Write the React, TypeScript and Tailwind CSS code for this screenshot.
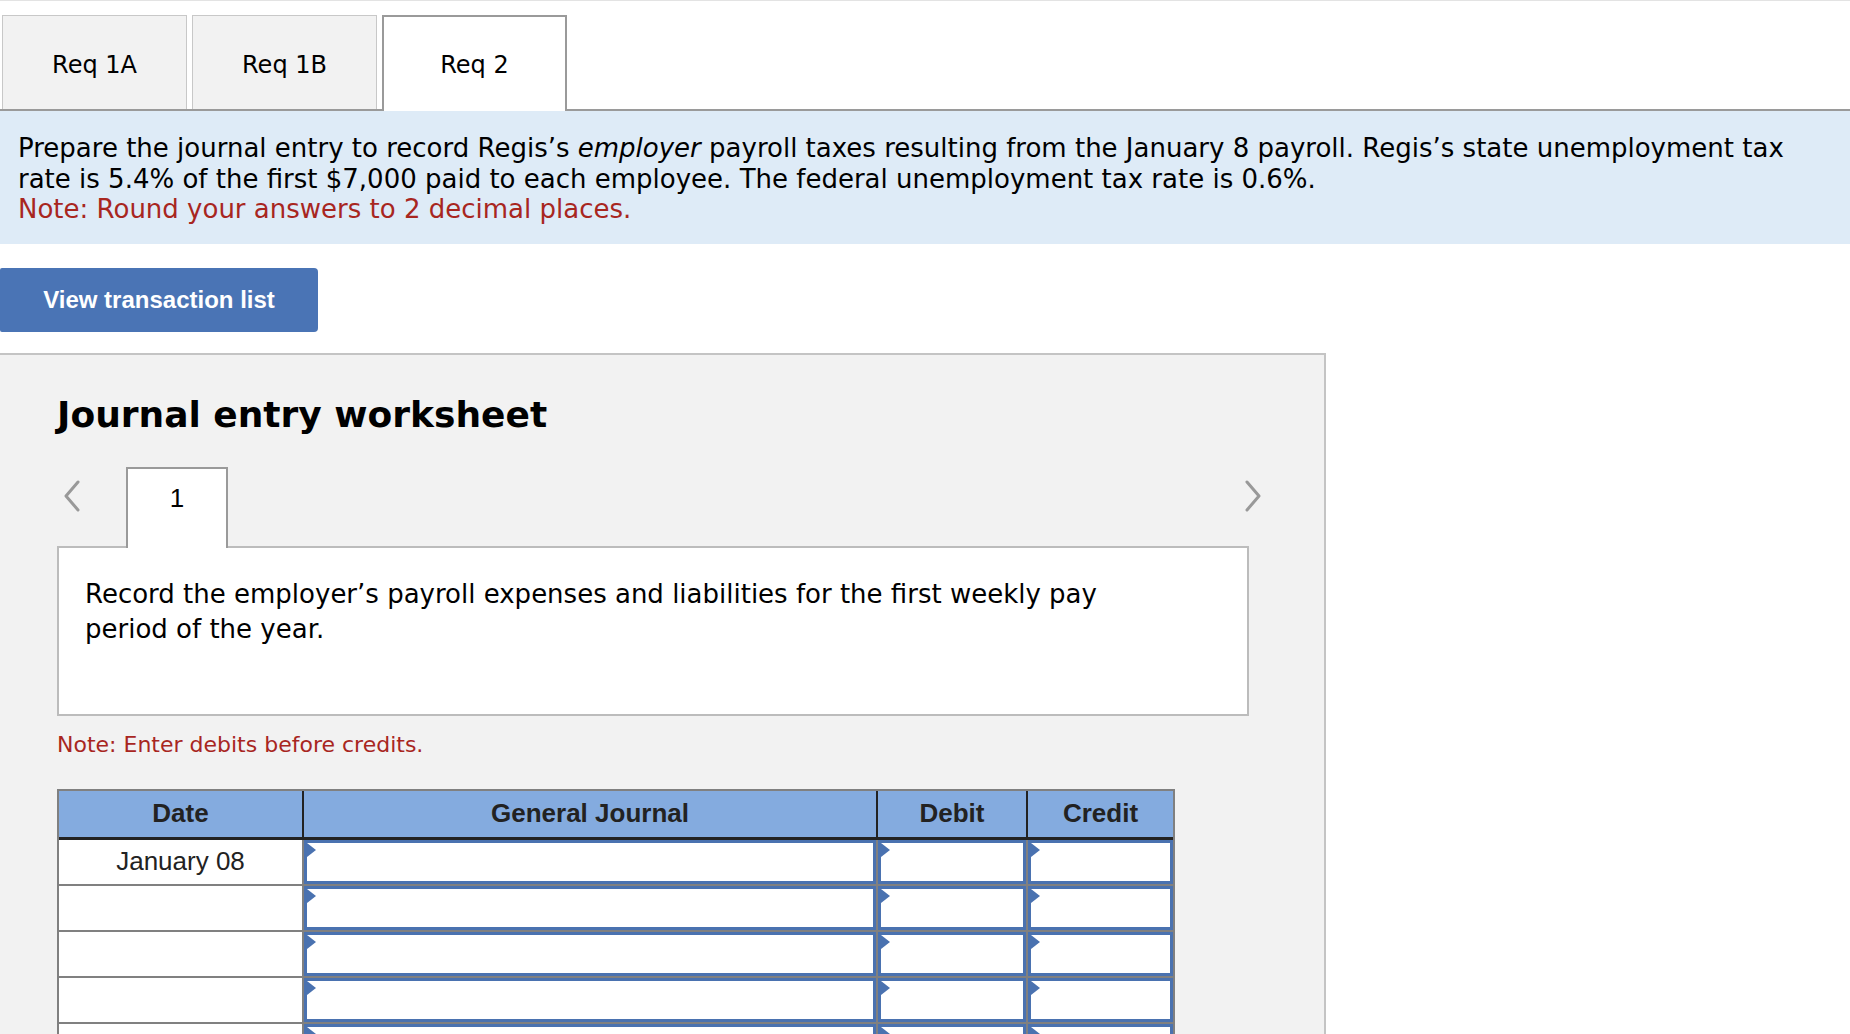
import React from 'react';

const verdana = { fontFamily: '"DejaVu Sans", Verdana, sans-serif' };
const arial = { fontFamily: '"Liberation Sans", Arial, sans-serif' };

const TABS = ['Req 1A', 'Req 1B', 'Req 2'];
const ROWS = ['January 08', '', '', '', '', ''];

function Flag() {
  return (
    <svg className="absolute left-0 top-0" width="9" height="14" viewBox="0 0 9 14">
      <path d="M0 0 L9 7 L0 14 Z" fill="#4a72b0" />
    </svg>
  );
}

function InputCell({ w }: { w: string }) {
  return (
    <div className={`relative h-[44px] border-[3px] border-[#4a72b0] bg-white ${w}`}>
      <Flag />
    </div>
  );
}

function Chevron({ dir }: { dir: 'left' | 'right' }) {
  return (
    <svg width="18" height="32" viewBox="0 0 18 32">
      <path
        d={dir === 'left' ? 'M15 2 L3 16 L15 30' : 'M3 2 L15 16 L3 30'}
        fill="none"
        stroke="#999"
        strokeWidth="3"
        strokeLinecap="round"
        strokeLinejoin="round"
      />
    </svg>
  );
}

export default function App() {
  return (
    <div className="min-h-screen bg-white text-black" style={verdana}>
      <div className="h-px bg-[#e3e3e3]" />

      {/* requirement tabs */}
      <div className="mt-[14px] flex items-end border-b-2 border-[#9a9a9a] pl-[2px]">
        {TABS.map((t, i) => {
          const active = i === 2;
          return (
            <div
              key={t}
              className={
                active
                  ? '-mb-[2px] mr-[5px] flex h-[96px] w-[185px] items-center justify-center border-2 border-b-0 border-[#9a9a9a] bg-white pt-[2px] text-[24px]'
                  : 'mr-[5px] flex h-[94px] w-[185px] items-center justify-center border border-b-0 border-[#c8c8c8] bg-[#f2f2f2] pt-[4px] text-[24px]'
              }
            >
              {t}
            </div>
          );
        })}
      </div>

      {/* instructions */}
      <div className="bg-[#deebf7] pb-[19px] pl-[18px] pr-[18px] pt-[22px] text-[26px] leading-[30.5px]">
        <p>
          Prepare the journal entry to record Regis’s <em>employer</em> payroll taxes resulting from the
          January 8 payroll. Regis’s state unemployment tax
          <br />
          rate is 5.4% of the first $7,000 paid to each employee. The federal unemployment tax rate is 0.6%.
        </p>
        <p className="text-[#a8261f]">Note: Round your answers to 2 decimal places.</p>
      </div>

      <button
        className="mt-[24px] h-[64px] w-[318px] rounded-l-[2px] rounded-r-[4px] bg-[#4a74b5] text-[24px] font-bold text-white"
        style={arial}
      >
        View transaction list
      </button>

      {/* worksheet panel */}
      <div className="mt-[21px] w-[1326px] border-r-2 border-t-2 border-[#c4c4c4] bg-[#f2f2f2] pb-[60px] pl-[57px] pt-[41px]">
        <h2 className="text-[36px] font-bold leading-[38px]">Journal entry worksheet</h2>

        <div className="mt-[33px] w-[1192px]">
          <div className="flex items-start">
            <div className="w-[69px] pl-[6px] pt-[13px]">
              <Chevron dir="left" />
            </div>
            <div
              className="relative z-10 -mb-[2px] flex h-[81px] w-[102px] items-center justify-center border-2 border-b-0 border-[#9a9a9a] bg-white pb-[20px] text-[26px]"
              style={arial}
            >
              1
            </div>
            <div className="flex-1" />
            <div className="-mr-[13px] pt-[13px]">
              <Chevron dir="right" />
            </div>
          </div>

          <div className="h-[170px] border-2 border-[#bcbcbc] bg-white pl-[26px] pr-[120px] pt-[29px] text-[26px] leading-[35px]">
            Record the employer’s payroll expenses and liabilities for the first weekly pay period of the year.
          </div>
        </div>

        <p className="mt-[17px] text-[22px] leading-[24px] text-[#a8261f]">Note: Enter debits before credits.</p>

        {/* journal table */}
        <div className="mt-[32px] w-[1118px] border-x-2 border-t-2 border-[#808080]" style={arial}>
          <div className="flex h-[49px] border-b-[3px] border-[#222] bg-[#84abdf] text-[26px] font-bold text-[#222]">
            <div className="flex w-[245px] items-center justify-center border-r-2 border-[#222]">Date</div>
            <div className="flex w-[574px] items-center justify-center border-r-2 border-[#222]">General Journal</div>
            <div className="flex w-[150px] items-center justify-center border-r-2 border-[#222]">Debit</div>
            <div className="flex flex-1 items-center justify-center">Credit</div>
          </div>
          {ROWS.map((d, i) => (
            <div key={i} className="flex gap-[2px] bg-[#808080] pb-[2px]">
              <div className="flex h-[44px] w-[243px] items-center justify-center bg-white text-[26px] text-[#222]">
                {d}
              </div>
              <InputCell w="w-[572px]" />
              <InputCell w="w-[148px]" />
              <InputCell w="flex-1" />
            </div>
          ))}
        </div>
      </div>
    </div>
  );
}
